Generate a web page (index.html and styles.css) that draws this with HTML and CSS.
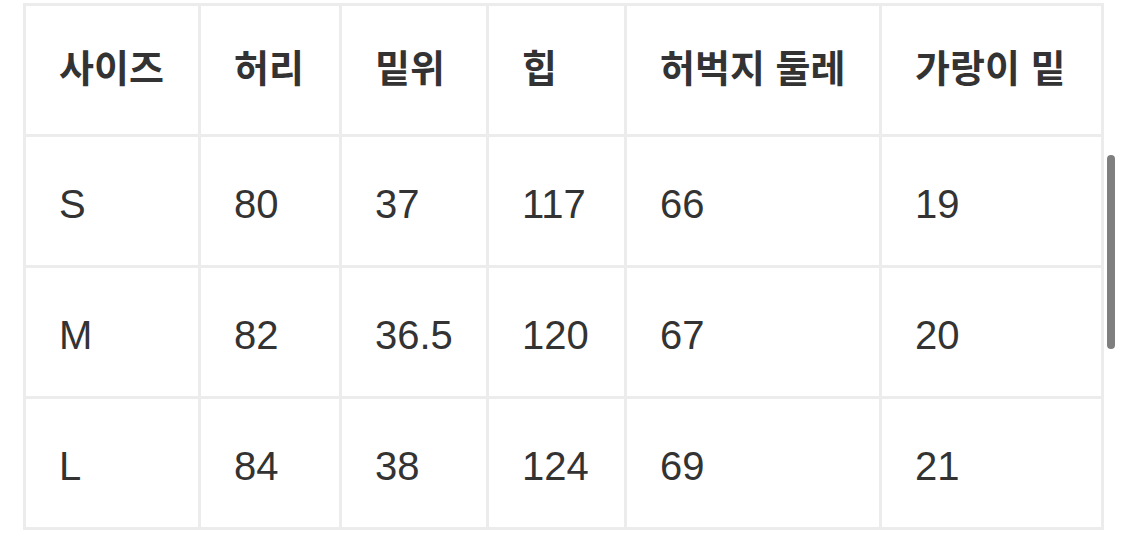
FILE: index.html
```html
<!DOCTYPE html>
<html lang="ko">
<head>
<meta charset="utf-8">
<link rel="stylesheet" href="styles.css">
</head>
<body>
<div class="wrap">
  <table class="size-table">
    <colgroup>
      <col class="c1"><col class="c2"><col class="c3"><col class="c4"><col class="c5"><col class="c6">
    </colgroup>
    <thead>
      <tr><th>사이즈</th><th>허리</th><th>밑위</th><th>힙</th><th>허벅지 둘레</th><th>가랑이 밑</th></tr>
    </thead>
    <tbody>
      <tr><td>S</td><td>80</td><td>37</td><td>117</td><td>66</td><td>19</td></tr>
      <tr><td>M</td><td>82</td><td>36.5</td><td>120</td><td>67</td><td>20</td></tr>
      <tr><td>L</td><td>84</td><td>38</td><td>124</td><td>69</td><td>21</td></tr>
    </tbody>
  </table>
  <div class="scrollbar"></div>
</div>
</body>
</html>
```
FILE: styles.css
```css
html, body {
  margin: 0;
  padding: 0;
  background: #ffffff;
}
.wrap {
  position: relative;
  width: 1125px;
  height: 534px;
  overflow: hidden;
  padding: 3px 0 0 23px;
  box-sizing: border-box;
}
.size-table {
  border-collapse: collapse;
  table-layout: fixed;
  width: 1078px;
  font-family: "Liberation Sans", "Noto Sans CJK KR", sans-serif;
  color: #333333;
}
.c1 { width: 175px; }
.c2 { width: 141px; }
.c3 { width: 147px; }
.c4 { width: 138px; }
.c5 { width: 255px; }
.c6 { width: 222px; }
.size-table th,
.size-table td {
  border: 3px solid #ececec;
  height: 131px;
  padding: 0 0 0 33px;
  text-align: left;
  vertical-align: middle;
  box-sizing: border-box;
}
.size-table th {
  font-family: "Noto Sans CJK KR", "Liberation Sans", sans-serif;
  font-weight: 700;
  font-size: 38px;
  letter-spacing: 0;
  padding-bottom: 10px;
}
.size-table td {
  font-size: 40px;
  font-weight: 400;
  padding-top: 6px;
}
.scrollbar {
  position: absolute;
  left: 1107px;
  top: 155px;
  width: 8px;
  height: 194px;
  border-radius: 4px;
  background: #7f7f7f;
}
```
